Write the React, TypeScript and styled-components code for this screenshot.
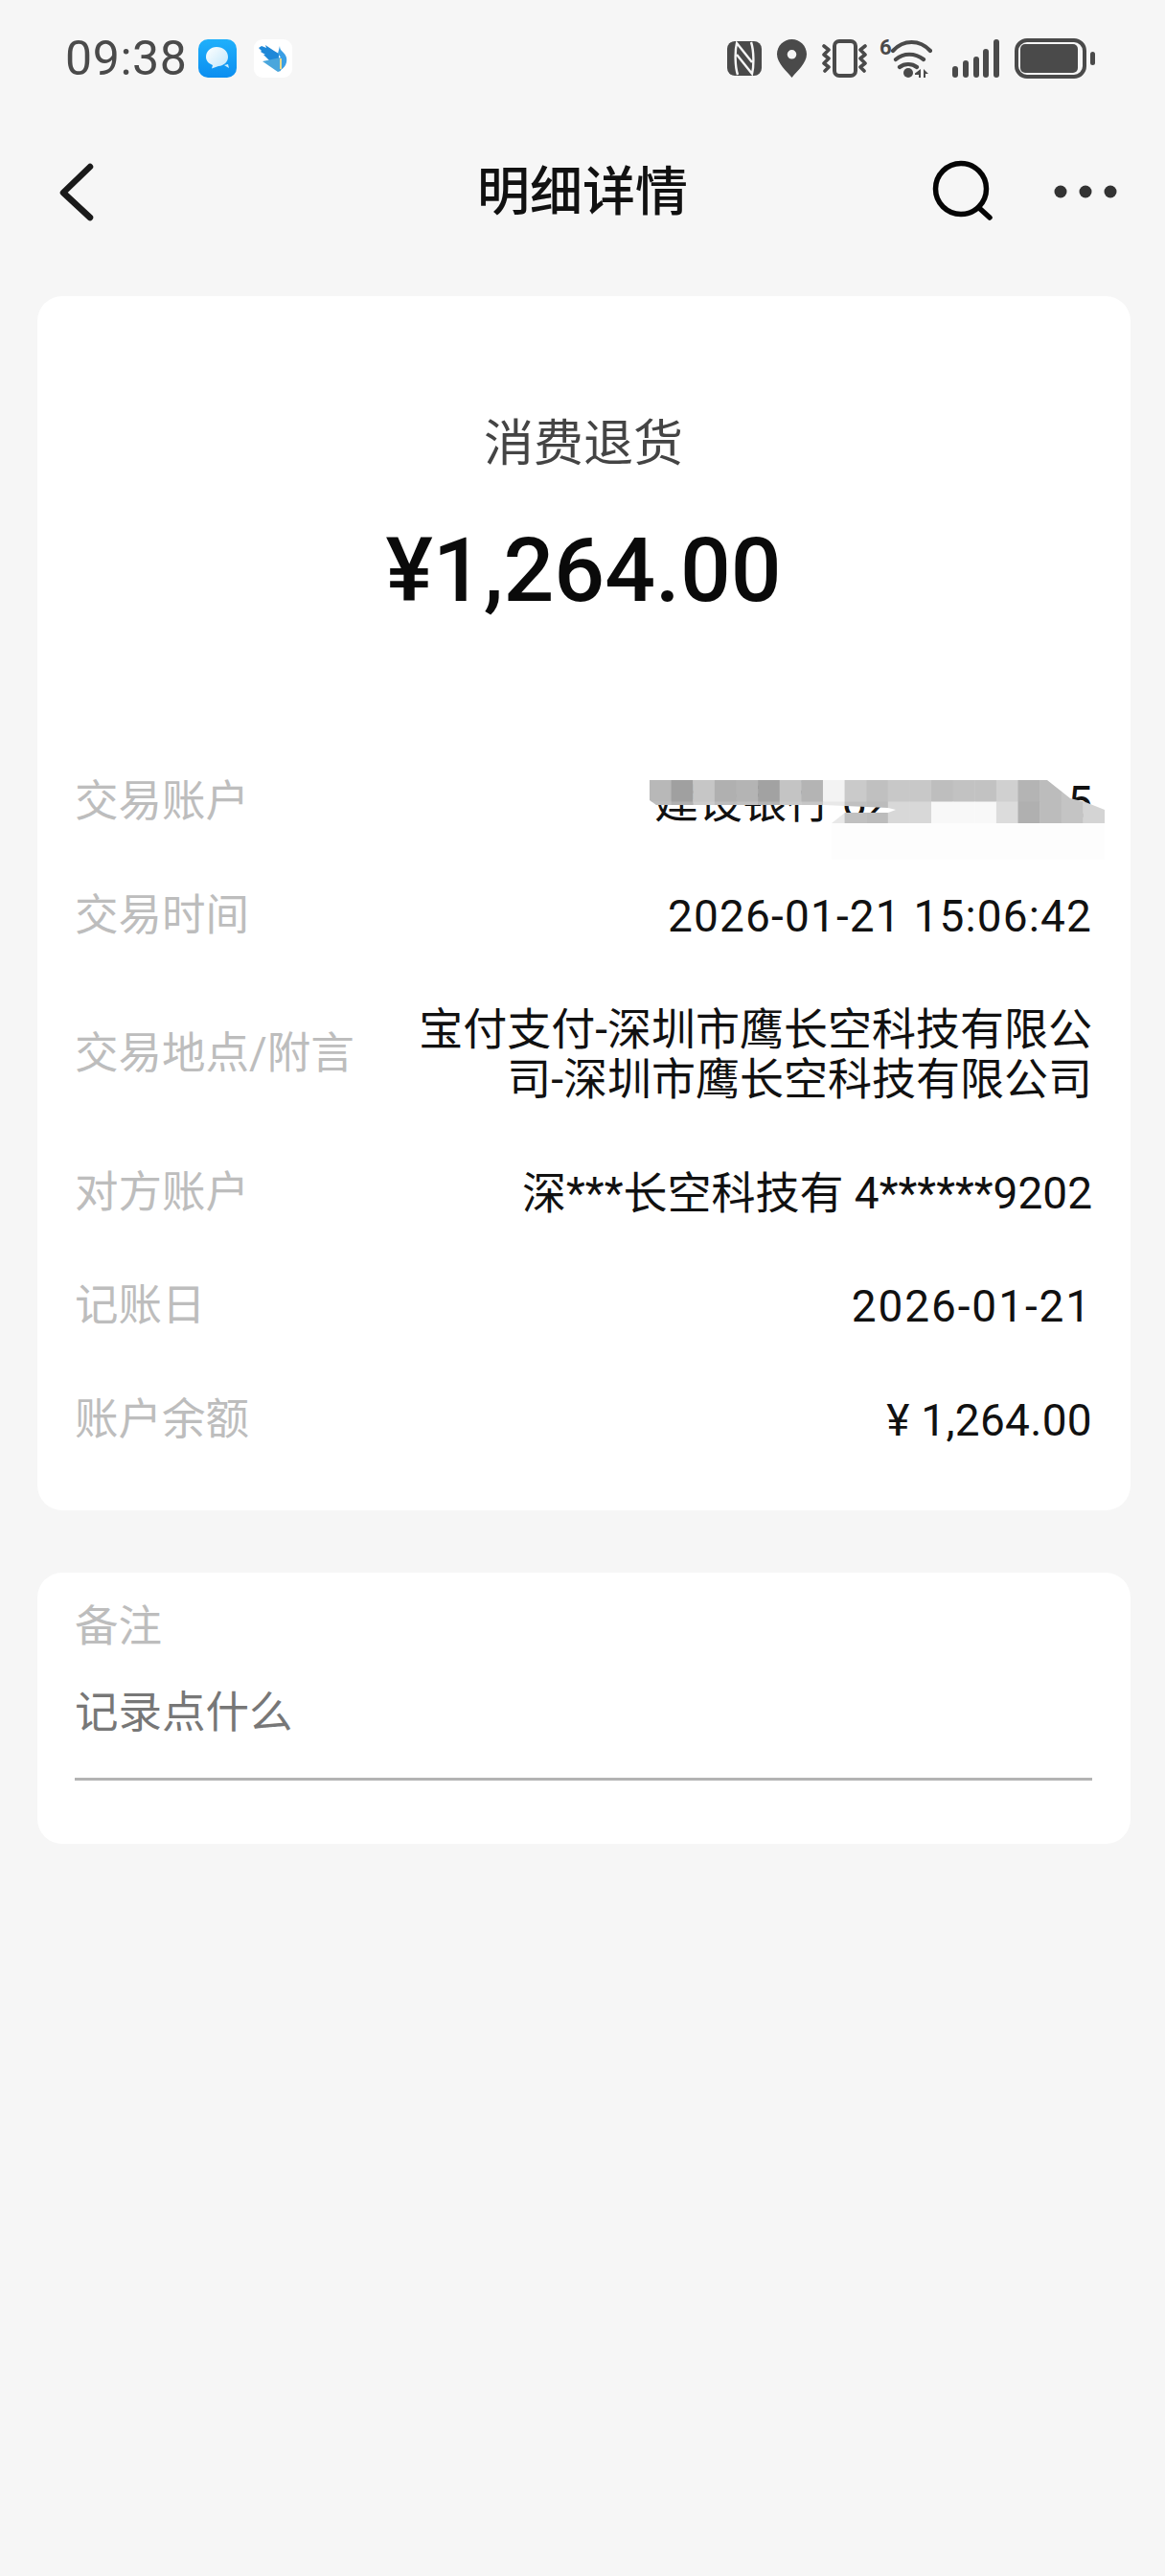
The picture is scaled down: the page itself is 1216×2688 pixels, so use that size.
import styled, { createGlobalStyle } from "styled-components";

const GlobalStyle = createGlobalStyle`
    html, body {
        margin: 0;
        padding: 0;
        background-color: #f6f6f6;
    }
    body {
        font-family: Roboto, "Noto Sans CJK SC", sans-serif;
    }
`;

const Page = styled.div`
    width: 1216px;
    height: 2688px;
    background-color: #f6f6f6;
    overflow: hidden;
`;

const StatusBar = styled.div`
    height: 122px;
    box-sizing: border-box;
    padding: 0 73px 0 68px;
    display: flex;
    align-items: center;
    justify-content: space-between;
`;
const StatusLeft = styled.div`
    display: flex;
    align-items: center;
`;
const Clock = styled.span`
    font-size: 50px;
    line-height: 60px;
    color: #4a4a4a;
    margin-right: 11px;
    letter-spacing: 0.6px;
`;
const AppIcon = styled.svg`
    display: block;
    width: 40px;
    height: 40px;
    margin-right: 18px;
`;
const StatusRight = styled.div`
    display: flex;
    align-items: center;
    gap: 16px;
`;
const StatusIcon = styled.svg`
    display: block;
    flex: none;
    fill: #4a4a4a;
`;
const WifiIcon = styled.div`
    position: relative;
    width: 55px;
    height: 41px;
    margin: 0 5px 0 -3px;
`;
const WifiBadge = styled.span`
    position: absolute;
    left: 0;
    top: -2px;
    font-size: 22px;
    line-height: 22px;
    font-weight: 700;
    color: #4a4a4a;
`;

const NavBar = styled.div`
    height: 156px;
    box-sizing: border-box;
    padding: 0 50px;
    display: grid;
    grid-template-columns: 1fr auto 1fr;
    align-items: center;
`;
const BackIcon = styled.svg`
    display: block;
    margin-left: 10px;
`;
const NavTitle = styled.h1`
    margin: 0;
    font-size: 55px;
    line-height: 64px;
    font-weight: 500;
    color: #111;
`;
const NavActions = styled.div`
    display: flex;
    align-items: center;
    justify-content: flex-end;
    gap: 62px;
`;

const Cards = styled.div`
    padding: 31px 36px 0 39px;
    display: flex;
    flex-direction: column;
    gap: 65px;
`;
const Card = styled.section`
    background-color: #fff;
    border-radius: 26px;
    padding: 0 40px 0 39px;
`;
const Hero = styled.div`
    padding-top: 121px;
    display: flex;
    flex-direction: column;
    align-items: center;
`;
const HeroType = styled.div`
    font-size: 52px;
    line-height: 68px;
    color: #444;
`;
const HeroAmount = styled.div`
    margin-top: 46px;
    font-size: 93px;
    line-height: 104px;
    font-weight: 500;
    color: #0a0a0a;
`;
const Rows = styled.div`
    margin-top: 163px;
    padding-bottom: 68px;
    display: flex;
    flex-direction: column;
    gap: 66.5px;
`;
const Row = styled.div`
    display: flex;
    align-items: center;
    justify-content: space-between;
`;
const Label = styled.span`
    flex: none;
    font-size: 45.5px;
    line-height: 52px;
    color: #bdbdbd;
`;
const Value = styled.span<{ $tracking?: number }>`
    position: relative;
    font-size: 46px;
    line-height: 52px;
    color: #111;
    text-align: right;
    max-width: 720px;
    letter-spacing: ${(p) => p.$tracking ?? 0}px;
`;
const AccountValue = styled(Value)`
    width: 457px;
    display: flex;
    justify-content: space-between;
`;
const Mosaic = styled.svg`
    position: absolute;
    top: 3px;
    right: -13px;
`;

const NoteCard = styled(Card)`
    padding-top: 31px;
    padding-bottom: 66px;
`;
const NoteLabel = styled(Label)`
    display: block;
`;
const NoteInput = styled.div`
    margin-top: 38px;
    padding-bottom: 41px;
    font-size: 45.5px;
    line-height: 52px;
    color: #777;
    border-bottom: 3px solid #b3b3b3;
`;

const topRow = ["#b8b8b8", "#a0a0a0", "#c6c6c6", "#b0b0b0", "#b4b4b4", "#a2a2a2", "#c4c4c4", "#b4b4b4", "#f3f3f3", "#cacaca", "#c0c0c0", "#c8c8c8", "#c8c8c8", "#bebebe", "#c2c2c2", "#c2c2c2", "#d0d0d0", "#b4b4b4", "#bcbcbc", "#c4c4c4", "#d4d4d4"];
const bottomRow = ["#bdbdbd", "#b0b0b0", "#cccccc", "#bcbcbc", "#c0c0c0", "#b4b4b4", "#cacaca", "#c6c6c6", "#e8e8e8", "#c0c0c0", "#bcbcbc", "#d8d8d8", "#d8d8d8", "#f8f8f8", "#f8f8f8", "#f8f8f8", "#dcdcdc", "#b0b0b0", "#bcbcbc", "#c4c4c4", "#d4d4d4"];
const cell = 475 / 21;

const details = [
    { label: "交易时间", value: ["2026-01-21 15:06:42"], tracking: 1.15 },
    { label: "交易地点/附言", value: ["宝付支付-深圳市鹰长空科技有限公", "司-深圳市鹰长空科技有限公司"] },
    { label: "对方账户", value: ["深***长空科技有 4******9202"] },
    { label: "记账日", value: ["2026-01-21"], tracking: 1.9 },
    { label: "账户余额", value: ["¥ 1,264.00"], tracking: 0.3 },
];

export default function App() {
    return (
        <Page>
            <GlobalStyle />
            <StatusBar>
                <StatusLeft>
                    <Clock>09:38</Clock>
                    <AppIcon viewBox="0 0 40 40">
                        <defs>
                            <linearGradient id="msg" x1="0" y1="0" x2="0" y2="1">
                                <stop offset="0" stopColor="#1fb0fb" />
                                <stop offset="1" stopColor="#0b8ef0" />
                            </linearGradient>
                            <linearGradient id="bubble" x1="0" y1="0" x2="1" y2="1">
                                <stop offset="0" stopColor="#ffffff" />
                                <stop offset="1" stopColor="#bfe6fb" />
                            </linearGradient>
                        </defs>
                        <rect width="40" height="40" rx="10" fill="url(#msg)" />
                        <path d="M19 8c7 0 12 4.500 12 10.500 0 5-4 9-10 9.500l-7 2.500 1-3.500c-4-1.500-7-4.500-7-8.500 0-6 5-10.500 11-10.500z" fill="url(#bubble)" />
                        <path d="M27 27l5 3-1-4z" fill="#cfeefc" />
                    </AppIcon>
                    <AppIcon viewBox="0 0 40 40">
                        <rect width="40" height="40" rx="9" fill="#fff" />
                        <path d="M5 9l3-2 5 2-1-3 9 6 5 3v10l-8-1-8-8 2 0-5-3 1-1z" fill="#1f88d8" />
                        <path d="M27 7c0 3 1 4 3 6 3 3 5 6 4 11-1 4-3 6-6 8v-13l-3-4z" fill="#3b9fe4" />
                        <path d="M9 23l19-4v14l-3 1z" fill="#4aa6dc" />
                        <path d="M27 20h2v11h-2z" fill="#ecd98a" />
                    </AppIcon>
                </StatusLeft>
                <StatusRight>
                    <StatusIcon width="36" height="36" viewBox="0 0 36 36">
                        <rect width="36" height="36" rx="8" />
                        <path d="M11 35C8 26 8 10 10 2l16 20M25 1c3 9 3 25 1 33L10 14" fill="none" stroke="#f6f6f6" strokeWidth="2.400" />
                    </StatusIcon>
                    <StatusIcon width="31" height="40" viewBox="0 0 31 40">
                        <path fillRule="evenodd" d="M15.500 0C7 0 0 7 0 15.500 0 25 10 33 15.500 40 21 33 31 25 31 15.500 31 7 24 0 15.500 0zm0 11a4.800 4.800 0 1 1 0 9.600 4.800 4.800 0 0 1 0-9.600z" />
                    </StatusIcon>
                    <StatusIcon width="47" height="40" viewBox="0 0 47 40">
                        <rect x="13" y="2" width="22" height="36" rx="5" fill="none" stroke="#4a4a4a" strokeWidth="4" />
                        <path d="M2 7l5 4-5 5 5 4-5 5 5 4-4 4M45 7l-5 4 5 5-5 4 5 5-5 4 4 4" fill="none" stroke="#4a4a4a" strokeWidth="3.600" strokeLinecap="round" strokeLinejoin="round" />
                    </StatusIcon>
                    <WifiIcon>
                        <WifiBadge>6</WifiBadge>
                        <StatusIcon width="55" height="41" viewBox="0 0 55 41">
                            <path d="M14 12C25 0 42 0 53 12M17 21c8-7 20-7 29 0M21 29c5-4 13-4 18 0" fill="none" stroke="#4a4a4a" strokeWidth="4.200" strokeLinecap="round" />
                            <circle cx="30" cy="35" r="5" />
                            <path d="M43 31v9h-2v-3h-4v-1.500zM46 31l5 5h-3v4h-2z" />
                        </StatusIcon>
                    </WifiIcon>
                    <StatusIcon width="49" height="40" viewBox="0 0 49 40">
                        <rect x="0" y="28" width="6" height="12" rx="3" />
                        <rect x="11" y="22" width="6" height="18" rx="3" />
                        <rect x="22" y="18" width="6" height="22" rx="3" />
                        <rect x="32" y="10" width="6" height="30" rx="3" />
                        <rect x="43" y="0" width="6" height="40" rx="3" />
                    </StatusIcon>
                    <StatusIcon width="84" height="42" viewBox="0 0 84 42">
                        <rect x="2" y="2" width="71" height="38" rx="11" fill="none" stroke="#4a4a4a" strokeWidth="4" />
                        <rect x="6" y="6" width="60" height="30" rx="5" />
                        <rect x="79" y="14" width="5" height="14" rx="2.500" />
                    </StatusIcon>
                </StatusRight>
            </StatusBar>

            <NavBar>
                <BackIcon width="40" height="64" viewBox="0 0 40 64">
                    <path d="M34 6L6 33l28 26" fill="none" stroke="#1a1a1a" strokeWidth="6.500" strokeLinecap="round" strokeLinejoin="round" />
                </BackIcon>
                <NavTitle>明细详情</NavTitle>
                <NavActions>
                    <svg width="66" height="66" viewBox="0 0 66 66">
                        <circle cx="31" cy="30" r="26.500" fill="none" stroke="#050505" strokeWidth="5.500" />
                        <path d="M50 50l11 10" fill="none" stroke="#050505" strokeWidth="5.500" strokeLinecap="round" />
                    </svg>
                    <svg width="66" height="14" viewBox="0 0 66 14">
                        <circle cx="7" cy="7" r="6.500" fill="#333" />
                        <circle cx="33" cy="7" r="6.500" fill="#333" />
                        <circle cx="59" cy="7" r="6.500" fill="#333" />
                    </svg>
                </NavActions>
            </NavBar>

            <Cards>
                <Card>
                    <Hero>
                        <HeroType>消费退货</HeroType>
                        <HeroAmount>¥1,264.00</HeroAmount>
                    </Hero>
                    <Rows>
                        <Row>
                            <Label>交易账户</Label>
                            <AccountValue>
                                <span>建设银行 62</span>
                                <span>5</span>
                                <Mosaic width="475" height="90" viewBox="0 0 475 90">
                                    <defs>
                                        <clipPath id="smear">
                                            <path d="M0 0H415L439 19 455 23 475 31V45H190L204 34H249L257 31 249 29 182 26H7L0 21Z" />
                                        </clipPath>
                                    </defs>
                                    <rect x="190" y="45" width="285" height="38" fill="#fdfdfd" />
                                    <g clipPath="url(#smear)">
                                        {topRow.map((c, i) => (
                                            <rect key={i} x={i * cell} y="0" width={cell + 0.5} height="23" fill={c} />
                                        ))}
                                        {bottomRow.map((c, i) => (
                                            <rect key={i} x={i * cell} y="22.500" width={cell + 0.5} height="22.500" fill={c} />
                                        ))}
                                    </g>
                                </Mosaic>
                            </AccountValue>
                        </Row>
                        {details.map((d) => (
                            <Row key={d.label}>
                                <Label>{d.label}</Label>
                                <Value $tracking={d.tracking}>
                                    {d.value.map((line) => (
                                        <div key={line}>{line}</div>
                                    ))}
                                </Value>
                            </Row>
                        ))}
                    </Rows>
                </Card>
                <NoteCard>
                    <NoteLabel>备注</NoteLabel>
                    <NoteInput>记录点什么</NoteInput>
                </NoteCard>
            </Cards>
        </Page>
    );
}
